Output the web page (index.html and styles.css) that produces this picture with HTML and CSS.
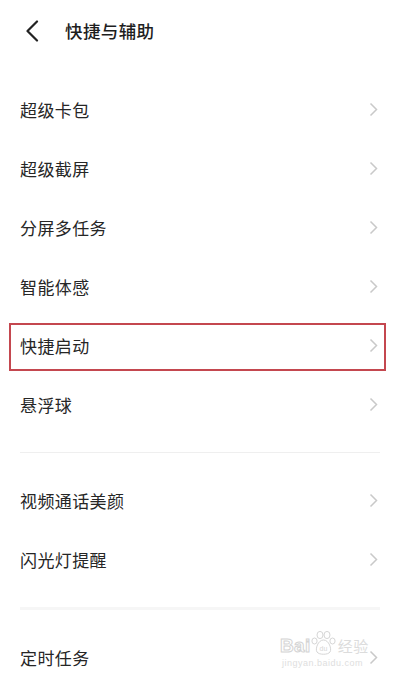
FILE: index.html
```html
<!DOCTYPE html>
<html lang="zh">
<head>
<meta charset="utf-8">
<link rel="stylesheet" href="styles.css">
</head>
<body>
<div class="page">
  <header class="header">
    <svg class="back" width="14" height="22" viewBox="0 0 14 22"><path d="M12 1.5 L2.5 11 L12 20.5" fill="none" stroke="#222" stroke-width="2.2" stroke-linecap="round" stroke-linejoin="round"/></svg>
    <h1 class="title">快捷与辅助</h1>
  </header>
  <ul class="list first">
    <li class="row"><span>超级卡包</span><svg class="chev" width="9" height="15" viewBox="0 0 9 15"><path d="M1.5 1.5 L7.5 7.5 L1.5 13.5" fill="none" stroke="#c9c9c9" stroke-width="1.5"/></svg></li>
    <li class="row"><span>超级截屏</span><svg class="chev" width="9" height="15" viewBox="0 0 9 15"><path d="M1.5 1.5 L7.5 7.5 L1.5 13.5" fill="none" stroke="#c9c9c9" stroke-width="1.5"/></svg></li>
    <li class="row"><span>分屏多任务</span><svg class="chev" width="9" height="15" viewBox="0 0 9 15"><path d="M1.5 1.5 L7.5 7.5 L1.5 13.5" fill="none" stroke="#c9c9c9" stroke-width="1.5"/></svg></li>
    <li class="row"><span>智能体感</span><svg class="chev" width="9" height="15" viewBox="0 0 9 15"><path d="M1.5 1.5 L7.5 7.5 L1.5 13.5" fill="none" stroke="#c9c9c9" stroke-width="1.5"/></svg></li>
    <li class="row marked"><span>快捷启动</span><svg class="chev" width="9" height="15" viewBox="0 0 9 15"><path d="M1.5 1.5 L7.5 7.5 L1.5 13.5" fill="none" stroke="#c9c9c9" stroke-width="1.5"/></svg></li>
    <li class="row"><span>悬浮球</span><svg class="chev" width="9" height="15" viewBox="0 0 9 15"><path d="M1.5 1.5 L7.5 7.5 L1.5 13.5" fill="none" stroke="#c9c9c9" stroke-width="1.5"/></svg></li>
  </ul>
  <div class="sep"><div class="line"></div></div>
  <ul class="list">
    <li class="row"><span>视频通话美颜</span><svg class="chev" width="9" height="15" viewBox="0 0 9 15"><path d="M1.5 1.5 L7.5 7.5 L1.5 13.5" fill="none" stroke="#c9c9c9" stroke-width="1.5"/></svg></li>
    <li class="row"><span>闪光灯提醒</span><svg class="chev" width="9" height="15" viewBox="0 0 9 15"><path d="M1.5 1.5 L7.5 7.5 L1.5 13.5" fill="none" stroke="#c9c9c9" stroke-width="1.5"/></svg></li>
  </ul>
  <div class="sep"><div class="line thick"></div></div>
  <ul class="list">
    <li class="row last"><span>定时任务</span><svg class="chev" width="9" height="15" viewBox="0 0 9 15"><path d="M1.5 1.5 L7.5 7.5 L1.5 13.5" fill="none" stroke="#c9c9c9" stroke-width="1.5"/></svg>
      <div class="watermark">
        <div class="wm-top">
          <span class="wm-bai">Bai</span>
          <svg class="wm-paw" width="26" height="26" viewBox="0 0 26 26"><g fill="none" stroke="#d6d6d6" stroke-width="1"><ellipse cx="9" cy="5" rx="3" ry="3.6"/><ellipse cx="16" cy="5" rx="3" ry="3.6"/><ellipse cx="3.5" cy="11" rx="2.6" ry="3"/><ellipse cx="21.5" cy="11" rx="2.6" ry="3"/><path d="M12.5 10 C7 10 4 19 6 22 C8 25 17 25 19 22 C21 19 18 10 12.5 10 Z"/></g><text x="12.5" y="21" text-anchor="middle" font-size="7" fill="#d6d6d6" font-family="Liberation Sans, sans-serif">du</text></svg>
          <span class="wm-jy">经验</span>
        </div>
        <div class="wm-url">jingyan.baidu.com</div>
      </div>
    </li>
  </ul>
</div>
</body>
</html>
```
FILE: styles.css
```css
html, body {
  margin: 0;
  padding: 0;
  background: #ffffff;
}
body {
  font-family: "Noto Sans CJK SC", "Noto Sans", sans-serif;
  color: #262626;
}
.page {
  width: 400px;
  height: 685px;
  overflow: hidden;
}
.header {
  height: 64px;
  display: flex;
  align-items: center;
  padding-left: 25px;
}
.back {
  display: block;
  margin-top: -2px;
}
.title {
  margin: -3px 0 0 26px;
  font-size: 17.5px;
  font-weight: 500;
  color: #1e1e1e;
  letter-spacing: 0.4px;
}
.list {
  list-style: none;
  margin: 0;
  padding: 0;
}
.list.first {
  padding-top: 16px;
}
.row {
  height: 59px;
  display: flex;
  align-items: center;
  justify-content: space-between;
  padding: 0 22px 0 20px;
  font-size: 17px;
  color: #262626;
  position: relative;
}
.row span {
  letter-spacing: 0.4px;
}
.chev {
  display: block;
}
.marked::after {
  content: "";
  position: absolute;
  left: 9px;
  right: 14px;
  top: 7px;
  bottom: 4px;
  border: 2px solid #c4474f;
}
.sep {
  padding: 18px 20px 18px 20px;
}
.line {
  height: 1px;
  background: #efefef;
}
.line.thick {
  height: 3px;
  background: #f6f6f6;
}
.watermark {
  position: absolute;
  left: 280px;
  top: 2px;
  width: 100px;
  color: #d8d8d8;
}
.wm-top {
  display: flex;
  align-items: flex-end;
}
.wm-bai {
  font-family: "Liberation Sans", sans-serif;
  font-size: 19px;
  font-weight: bold;
  color: transparent;
  -webkit-text-stroke: 1px #d4d4d4;
  line-height: 20px;
  letter-spacing: 0.5px;
}
.wm-paw {
  display: block;
  margin: 0 1px 0 0;
}
.wm-jy {
  font-size: 15px;
  line-height: 20px;
  color: #dcdcdc;
}
.wm-url {
  font-family: "Liberation Sans", sans-serif;
  font-size: 9px;
  color: #dedede;
  margin-top: 2px;
  padding-left: 2px;
  letter-spacing: 0.5px;
}
```
